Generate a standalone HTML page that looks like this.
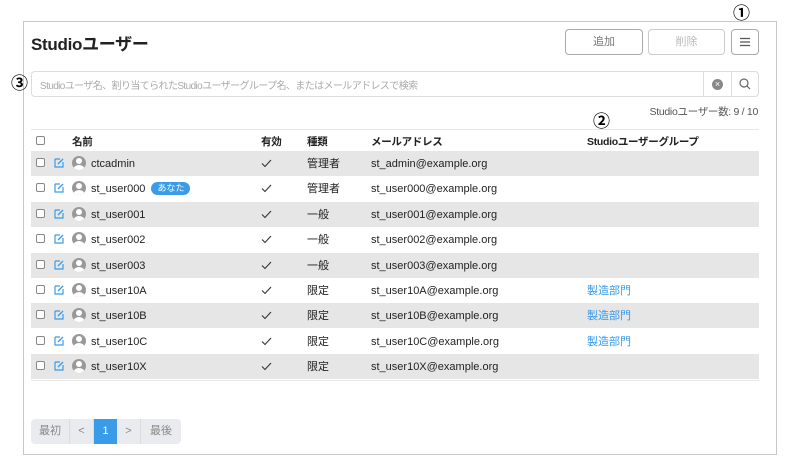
<!DOCTYPE html>
<html><head><meta charset="utf-8"><style>
*{box-sizing:border-box;margin:0;padding:0}
body{width:788px;height:462px;background:#fff;font-family:"Liberation Sans","Noto Sans CJK JP",sans-serif;color:#222;position:relative;overflow:hidden;font-size:11px}
.panel{position:absolute;left:23px;top:21px;width:754px;height:434px;border:1px solid #c8c8c8}
.abs{position:absolute}
.title{left:31px;top:30px;font-size:17px;font-weight:bold;letter-spacing:-0.3px;color:#222}
.btn{position:absolute;top:29px;height:26px;border:1px solid #aaa;border-radius:4px;background:#fff;color:#777;font-size:11px;text-align:center;line-height:24px}
.circ{position:absolute;font-size:17px;font-weight:bold;color:#000;line-height:18px}
.search{left:31px;top:71px;width:728px;height:26px;border:1px solid #ddd;border-radius:4px}
.search span{position:absolute;left:8px;top:5px;color:#aaa;font-size:10px;letter-spacing:-0.6px}
.row{position:absolute;left:31px;width:728px;height:25px;font-size:11px}
.row .c{top:5px;line-height:16px}
.row.g{background:#e6e6e6}
.cb{position:absolute;left:5px;top:7px;width:9px;height:9px;border:1px solid #888;border-radius:2px;background:#fff}
.ed{position:absolute;left:23px;top:6px}
.av{position:absolute;left:41px;top:5px;width:14px;height:14px;border-radius:50%;background:#999;overflow:hidden}
.av:before{content:"";position:absolute;left:4px;top:2px;width:6px;height:6px;border-radius:50%;background:#fff}
.av:after{content:"";position:absolute;left:1px;top:9px;width:12px;height:10px;border-radius:50%;background:#fff}
.c{position:absolute}
.hd .c{font-size:10.5px;font-weight:bold;letter-spacing:-0.3px}
.ck{position:absolute;left:230px;top:8px}
.tag{display:inline-block;background:#3a9be8;color:#fff;border-radius:8px;font-size:9px;line-height:13px;padding:0 6px;margin-left:6px;vertical-align:1px}
.lnk{color:#3a9be8}
.pg{position:absolute;top:419px;height:25px;line-height:25px;background:#e9ebee;color:#888;font-size:11px;text-align:center;border-right:1px solid #ddd}
</style></head><body>
<div class="panel"></div>
<div class="abs title">Studioユーザー</div>
<div class="btn" style="left:565px;width:78px">追加</div>
<div class="btn" style="left:648px;width:77px;color:#bbb;border-color:#ccc">削除</div>
<div class="btn" style="left:731px;width:28px"><svg width="12" height="10" style="margin-top:7px"><path d="M1 1.5h10M1 5h10M1 8.5h10" stroke="#555" stroke-width="1.2"/></svg></div>
<div class="circ" style="left:733px;top:5px">①</div>
<div class="circ" style="left:593px;top:113px">②</div>
<div class="circ" style="left:11px;top:75px">③</div>
<div class="abs search"><span>Studioユーザ名、割り当てられたStudioユーザーグループ名、またはメールアドレスで検索</span>
<div class="abs" style="left:671px;top:0;width:1px;height:24px;background:#ddd"></div>
<div class="abs" style="left:680px;top:7px;width:11px;height:11px;border-radius:50%;background:#888;color:#fff;font-size:9px;line-height:11px;text-align:center">×</div>
<div class="abs" style="left:699px;top:0;width:1px;height:24px;background:#ddd"></div>
<svg class="abs" style="left:707px;top:6px" width="12" height="12"><circle cx="5" cy="5" r="4" fill="none" stroke="#666" stroke-width="1.2"/><line x1="8" y1="8" x2="11" y2="11" stroke="#666" stroke-width="1.2"/></svg>
</div>
<div class="abs" style="right:30px;top:104px;color:#555;font-size:10.5px;letter-spacing:-0.3px">Studioユーザー数: 9 / 10</div>
<div class="abs" style="left:31px;top:129px;width:728px;height:1px;background:#e8e8e8"></div>
<div class="row hd" style="top:129px">
<div class="cb"></div><div class="c" style="left:41px">名前</div><div class="c" style="left:230px">有効</div><div class="c" style="left:276px">種類</div><div class="c" style="left:340px">メールアドレス</div><div class="c" style="left:556px">Studioユーザーグループ</div></div>

<div class="row g" style="top:151px"><div class="cb"></div><svg class="ed" width="11" height="11"><path d="M1 2h5M1 2v8h8V5" fill="none" stroke="#3a9be8" stroke-width="1.2"/><path d="M4 7l5-5" stroke="#3a9be8" stroke-width="1.3"/></svg><div class="av"></div><div class="c" style="left:60px">ctcadmin</div><svg class="ck" width="11" height="9"><path d="M1 4.5l3 3L10 1" fill="none" stroke="#333" stroke-width="1.1"/></svg><div class="c" style="left:276px">管理者</div><div class="c" style="left:340px">st_admin@example.org</div></div>
<div class="row" style="top:176px"><div class="cb"></div><svg class="ed" width="11" height="11"><path d="M1 2h5M1 2v8h8V5" fill="none" stroke="#3a9be8" stroke-width="1.2"/><path d="M4 7l5-5" stroke="#3a9be8" stroke-width="1.3"/></svg><div class="av"></div><div class="c" style="left:60px">st_user000<span class="tag">あなた</span></div><svg class="ck" width="11" height="9"><path d="M1 4.5l3 3L10 1" fill="none" stroke="#333" stroke-width="1.1"/></svg><div class="c" style="left:276px">管理者</div><div class="c" style="left:340px">st_user000@example.org</div></div>
<div class="row g" style="top:202px"><div class="cb"></div><svg class="ed" width="11" height="11"><path d="M1 2h5M1 2v8h8V5" fill="none" stroke="#3a9be8" stroke-width="1.2"/><path d="M4 7l5-5" stroke="#3a9be8" stroke-width="1.3"/></svg><div class="av"></div><div class="c" style="left:60px">st_user001</div><svg class="ck" width="11" height="9"><path d="M1 4.5l3 3L10 1" fill="none" stroke="#333" stroke-width="1.1"/></svg><div class="c" style="left:276px">一般</div><div class="c" style="left:340px">st_user001@example.org</div></div>
<div class="row" style="top:227px"><div class="cb"></div><svg class="ed" width="11" height="11"><path d="M1 2h5M1 2v8h8V5" fill="none" stroke="#3a9be8" stroke-width="1.2"/><path d="M4 7l5-5" stroke="#3a9be8" stroke-width="1.3"/></svg><div class="av"></div><div class="c" style="left:60px">st_user002</div><svg class="ck" width="11" height="9"><path d="M1 4.5l3 3L10 1" fill="none" stroke="#333" stroke-width="1.1"/></svg><div class="c" style="left:276px">一般</div><div class="c" style="left:340px">st_user002@example.org</div></div>
<div class="row g" style="top:253px"><div class="cb"></div><svg class="ed" width="11" height="11"><path d="M1 2h5M1 2v8h8V5" fill="none" stroke="#3a9be8" stroke-width="1.2"/><path d="M4 7l5-5" stroke="#3a9be8" stroke-width="1.3"/></svg><div class="av"></div><div class="c" style="left:60px">st_user003</div><svg class="ck" width="11" height="9"><path d="M1 4.5l3 3L10 1" fill="none" stroke="#333" stroke-width="1.1"/></svg><div class="c" style="left:276px">一般</div><div class="c" style="left:340px">st_user003@example.org</div></div>
<div class="row" style="top:278px"><div class="cb"></div><svg class="ed" width="11" height="11"><path d="M1 2h5M1 2v8h8V5" fill="none" stroke="#3a9be8" stroke-width="1.2"/><path d="M4 7l5-5" stroke="#3a9be8" stroke-width="1.3"/></svg><div class="av"></div><div class="c" style="left:60px">st_user10A</div><svg class="ck" width="11" height="9"><path d="M1 4.5l3 3L10 1" fill="none" stroke="#333" stroke-width="1.1"/></svg><div class="c" style="left:276px">限定</div><div class="c" style="left:340px">st_user10A@example.org</div><div class="c lnk" style="left:556px">製造部門</div></div>
<div class="row g" style="top:303px"><div class="cb"></div><svg class="ed" width="11" height="11"><path d="M1 2h5M1 2v8h8V5" fill="none" stroke="#3a9be8" stroke-width="1.2"/><path d="M4 7l5-5" stroke="#3a9be8" stroke-width="1.3"/></svg><div class="av"></div><div class="c" style="left:60px">st_user10B</div><svg class="ck" width="11" height="9"><path d="M1 4.5l3 3L10 1" fill="none" stroke="#333" stroke-width="1.1"/></svg><div class="c" style="left:276px">限定</div><div class="c" style="left:340px">st_user10B@example.org</div><div class="c lnk" style="left:556px">製造部門</div></div>
<div class="row" style="top:329px"><div class="cb"></div><svg class="ed" width="11" height="11"><path d="M1 2h5M1 2v8h8V5" fill="none" stroke="#3a9be8" stroke-width="1.2"/><path d="M4 7l5-5" stroke="#3a9be8" stroke-width="1.3"/></svg><div class="av"></div><div class="c" style="left:60px">st_user10C</div><svg class="ck" width="11" height="9"><path d="M1 4.5l3 3L10 1" fill="none" stroke="#333" stroke-width="1.1"/></svg><div class="c" style="left:276px">限定</div><div class="c" style="left:340px">st_user10C@example.org</div><div class="c lnk" style="left:556px">製造部門</div></div>
<div class="row g" style="top:354px"><div class="cb"></div><svg class="ed" width="11" height="11"><path d="M1 2h5M1 2v8h8V5" fill="none" stroke="#3a9be8" stroke-width="1.2"/><path d="M4 7l5-5" stroke="#3a9be8" stroke-width="1.3"/></svg><div class="av"></div><div class="c" style="left:60px">st_user10X</div><svg class="ck" width="11" height="9"><path d="M1 4.5l3 3L10 1" fill="none" stroke="#333" stroke-width="1.1"/></svg><div class="c" style="left:276px">限定</div><div class="c" style="left:340px">st_user10X@example.org</div></div>
<div class="abs" style="left:31px;top:380px;width:728px;height:1px;background:#e8e8e8"></div>

<div class="pg" style="left:31px;width:39px;border-radius:4px 0 0 4px">最初</div>
<div class="pg" style="left:70px;width:24px">&lt;</div>
<div class="pg" style="left:94px;width:23px;background:#3a9be8;color:#fff;border:none">1</div>
<div class="pg" style="left:117px;width:24px">&gt;</div>
<div class="pg" style="left:141px;width:40px;border-radius:0 4px 4px 0;border:none">最後</div>
</body></html>
